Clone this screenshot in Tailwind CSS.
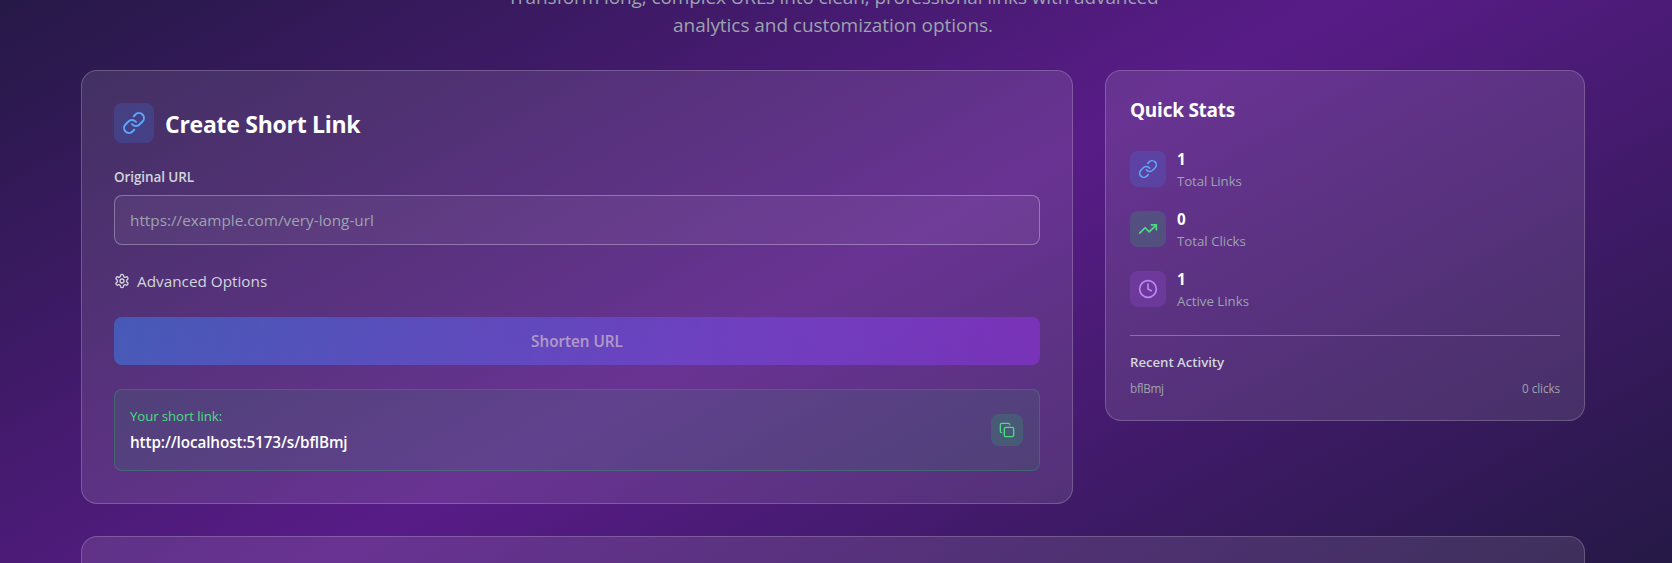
<!DOCTYPE html>
<html lang="en">
<head>
<meta charset="utf-8">
<title>Short Link</title>
<script src="https://cdn.jsdelivr.net/npm/@tailwindcss/browser@4"></script>
</head>
<body class="bg-[#0f172a]">
<main class="h-[563px] overflow-hidden font-['Segoe_UI','Open_Sans',sans-serif] text-white bg-[linear-gradient(151.2deg,#0f172a_-22%,#581c87_49.8%,#0f172a_121%)]">
<div class="ml-[81px] w-[1504px]">
  <p class="-mt-[17px] mb-[31px] text-center text-[19px] leading-7 tracking-[-0.05px] text-[#9ca3af]"><span class="tracking-[-0.11px]">Transform long, complex URLs into clean, professional links with advanced</span><br>analytics and customization options.</p>
  <div class="grid grid-cols-3 items-start gap-8">
    <section class="col-span-2 rounded-2xl border border-white/20 bg-white/10 p-8">
      <div class="mb-6 flex items-center gap-[11px]">
        <div class="rounded-lg bg-[#3b82f6]/20 p-2">
          <svg class="size-6 text-[#60a5fa]" viewBox="0 0 24 24" fill="none" stroke="currentColor" stroke-width="2" stroke-linecap="round" stroke-linejoin="round"><path d="M10 13a5 5 0 0 0 7.54.54l3-3a5 5 0 0 0-7.07-7.07l-1.72 1.71"/><path d="M14 11a5 5 0 0 0-7.54-.54l-3 3a5 5 0 0 0 7.07 7.07l1.71-1.71"/></svg>
        </div>
        <h2 class="pt-[2px] text-[23px] leading-8 font-bold tracking-[-0.27px]">Create Short Link</h2>
      </div>
      <label for="url" class="mb-2 block text-[13.5px] leading-5 font-semibold tracking-[-0.1px] text-[#d1d5db]">Original URL</label>
      <input id="url" type="url" placeholder="https://example.com/very-long-url" class="block h-[50px] w-full rounded-lg border border-white/30 bg-white/5 px-[15px] py-3 text-[15.3px] leading-6 placeholder:text-[#9ca3af]">
      <button class="mt-6 flex items-center gap-[7px] text-[15.3px] leading-6 text-[#d1d5db]">
        <svg class="size-4" viewBox="0 0 24 24" fill="none" stroke="currentColor" stroke-width="2" stroke-linecap="round" stroke-linejoin="round"><path d="M12.22 2h-.44a2 2 0 0 0-2 2v.18a2 2 0 0 1-1 1.73l-.43.25a2 2 0 0 1-2 0l-.15-.08a2 2 0 0 0-2.73.73l-.22.38a2 2 0 0 0 .73 2.73l.15.1a2 2 0 0 1 1 1.72v.51a2 2 0 0 1-1 1.74l-.15.09a2 2 0 0 0-.73 2.73l.22.38a2 2 0 0 0 2.73.73l.15-.08a2 2 0 0 1 2 0l.43.25a2 2 0 0 1 1 1.73V20a2 2 0 0 0 2 2h.44a2 2 0 0 0 2-2v-.18a2 2 0 0 1 1-1.73l.43-.25a2 2 0 0 1 2 0l.15.08a2 2 0 0 0 2.73-.73l.22-.39a2 2 0 0 0-.73-2.73l-.15-.08a2 2 0 0 1-1-1.74v-.5a2 2 0 0 1 1-1.74l.15-.09a2 2 0 0 0 .73-2.73l-.22-.38a2 2 0 0 0-2.73-.73l-.15.08a2 2 0 0 1-2 0l-.43-.25a2 2 0 0 1-1-1.73V4a2 2 0 0 0-2-2z"/><circle cx="12" cy="12" r="3"/></svg>
        <span>Advanced Options</span>
      </button>
      <button class="mt-6 block h-12 w-full rounded-lg bg-[linear-gradient(to_right,#3b82f6,#9333ea)] text-[15.25px] leading-6 font-semibold opacity-50">Shorten URL</button>
      <div class="mt-6 flex items-center justify-between rounded-lg border border-[#22c55e]/30 bg-[#22c55e]/10 py-4 pr-4 pl-[15px]">
        <div>
          <p class="mb-1 text-[13.25px] leading-5 tracking-[-0.1px] text-[#4ade80]">Your short link:</p>
          <p class="text-[15.25px] leading-6 font-semibold tracking-[-0.1px]">http://localhost:5173/s/bflBmj</p>
        </div>
        <button aria-label="Copy" class="rounded-lg bg-[#22c55e]/20 p-2 text-[#4ade80]">
          <svg class="size-4" viewBox="0 0 24 24" fill="none" stroke="currentColor" stroke-width="2" stroke-linecap="round" stroke-linejoin="round"><rect width="14" height="14" x="8" y="8" rx="2"/><path d="M4 16c-1.1 0-2-.9-2-2V4c0-1.1.9-2 2-2h10c1.1 0 2 .9 2 2"/></svg>
        </button>
      </div>
    </section>
    <section class="rounded-2xl border border-white/20 bg-white/10 p-6">
      <h3 class="mb-[23px] pt-px text-[19px] leading-7 font-bold tracking-[-0.25px]">Quick Stats</h3>
      <div class="flex flex-col gap-4">
        <div class="flex items-center gap-[11px]">
          <div class="rounded-lg bg-[#3b82f6]/20 p-2 text-[#60a5fa]"><svg class="size-5" viewBox="0 0 24 24" fill="none" stroke="currentColor" stroke-width="2" stroke-linecap="round" stroke-linejoin="round"><path d="M10 13a5 5 0 0 0 7.54.54l3-3a5 5 0 0 0-7.07-7.07l-1.72 1.71"/><path d="M14 11a5 5 0 0 0-7.54-.54l-3 3a5 5 0 0 0 7.07 7.07l1.71-1.71"/></svg></div>
          <div><p class="text-[15.25px] leading-6 font-bold">1</p><p class="text-[13.25px] leading-5 tracking-[-0.1px] text-[#9ca3af]">Total Links</p></div>
        </div>
        <div class="flex items-center gap-[11px]">
          <div class="rounded-lg bg-[#22c55e]/20 p-2 text-[#4ade80]"><svg class="size-5" viewBox="0 0 24 24" fill="none" stroke="currentColor" stroke-width="2" stroke-linecap="round" stroke-linejoin="round"><path d="m22 7-8.5 8.5-5-5L2 17"/><path d="M16 7h6v6"/></svg></div>
          <div><p class="text-[15.25px] leading-6 font-bold">0</p><p class="text-[13.25px] leading-5 text-[#9ca3af]">Total Clicks</p></div>
        </div>
        <div class="flex items-center gap-[11px]">
          <div class="rounded-lg bg-[#a855f7]/20 p-2 text-[#c084fc]"><svg class="size-5" viewBox="0 0 24 24" fill="none" stroke="currentColor" stroke-width="2" stroke-linecap="round" stroke-linejoin="round"><circle cx="12" cy="12" r="10"/><path d="M12 6v6l4 2"/></svg></div>
          <div><p class="text-[15.25px] leading-6 font-bold">1</p><p class="text-[13.25px] leading-5 text-[#9ca3af]">Active Links</p></div>
        </div>
      </div>
      <div class="mt-6 border-t border-white/30 pt-4">
        <h4 class="mb-2 text-[13.25px] leading-5 font-semibold tracking-[-0.05px] text-[#d1d5db]">Recent Activity</h4>
        <div class="flex justify-between text-[11.75px] leading-4 tracking-[-0.1px] text-[#9ca3af]"><span class="tracking-[-0.3px]">bflBmj</span><span>0 clicks</span></div>
      </div>
    </section>
    <section class="col-span-3 h-40 rounded-2xl border border-white/20 bg-white/10 p-8"></section>
  </div>
</div>
</main>
</body>
</html>
